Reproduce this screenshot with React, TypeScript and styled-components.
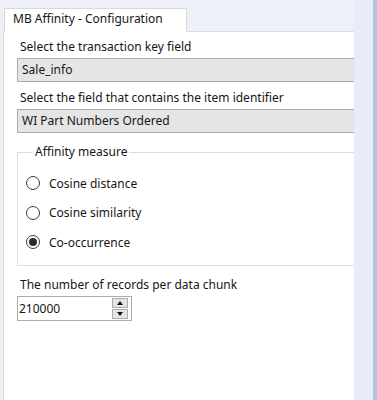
import React from "react";
import styled, {createGlobalStyle} from "styled-components";

const GlobalStyle = createGlobalStyle`
  body {
    margin: 0;
    font-family: "Noto Sans", "Open Sans", sans-serif;
    font-size: 12px;
    color: #161616;
  }
`;

const Window = styled.div`
  width: 377px;
  height: 400px;
  display: flex;
  overflow: hidden;
  background-color: #eef0f8;
`;

const Main = styled.div`
  flex: 1;
  display: flex;
  flex-direction: column;
  padding: 8px 0 0 3px;
`;

const TabStrip = styled.div`
  height: 23px;
  display: flex;
  padding-left: 1px;
`;

const Tab = styled.div`
  width: 183px;
  height: 24px;
  box-sizing: border-box;
  padding-left: 8px;
  line-height: 20px;
  background-color: white;
  border: 1px solid #d9d9d9;
  border-bottom: none;
  position: relative;
  z-index: 1;
`;

const Panel = styled.div`
  flex: 1;
  background-color: white;
  border: 1px solid #dcdcdc;
  border-right: none;
  border-bottom: none;
  padding: 7px 0 0 13px;
`;

const FieldLabel = styled.div<{$top?: number}>`
  height: 16px;
  line-height: 16px;
  padding-left: 3px;
  margin-top: ${(p) => p.$top ?? 0}px;
  margin-bottom: 3px;
`;

const Combo = styled.div`
  height: 24px;
  box-sizing: border-box;
  line-height: 22px;
  padding-left: 4px;
  background-color: #e5e5e5;
  border: 1px solid #acacac;
  border-right: none;
`;

const Group = styled.fieldset`
  margin: 11px 0 0 0;
  padding: 15px 0 0 8px;
  border: 1px solid #dcdcdc;
  border-right: none;
  height: 122px;
  box-sizing: border-box;
  display: flex;
  flex-direction: column;
  gap: 13.5px;
`;

const Legend = styled.legend`
  padding: 0 2px;
  margin-left: 7px;
  line-height: 16px;
`;

const RadioRow = styled.label`
  display: flex;
  align-items: center;
  gap: 9px;
  height: 16px;
`;

const RadioCircle = styled.span<{$checked?: boolean}>`
  width: 14px;
  height: 14px;
  box-sizing: border-box;
  border: 1px solid #3a3a3a;
  border-radius: 50%;
  display: flex;
  align-items: center;
  justify-content: center;

  &::after {
    content: "";
    width: 8px;
    height: 8px;
    border-radius: 50%;
    background-color: ${(p) => (p.$checked ? "#2a2a2a" : "transparent")};
  }
`;

const SpinBox = styled.div`
  width: 115px;
  height: 25px;
  box-sizing: border-box;
  border: 1px solid #acacac;
  display: flex;
  align-items: center;
  justify-content: space-between;
  padding: 1px 3px 1px 1px;
`;

const SpinValue = styled.span`
  line-height: 20px;
`;

const SpinButtons = styled.div`
  display: flex;
  flex-direction: column;
  gap: 1px;
`;

const SpinButton = styled.div<{$down?: boolean}>`
  width: 16px;
  height: 10px;
  box-sizing: border-box;
  background-color: #e5e5e5;
  border: 1px solid #acacac;
  display: flex;
  align-items: center;
  justify-content: center;

  &::after {
    content: "";
    border-left: 3px solid transparent;
    border-right: 3px solid transparent;
    ${(p) =>
      p.$down ? "border-top: 4px solid #111;" : "border-bottom: 4px solid #111;"}
  }
`;

const SideStrip = styled.div`
  width: 19px;
  background-color: #e8ecf8;
`;

const Edge = styled.div`
  width: 4px;
  background-color: #b1c1e6;
`;

const measures = [
  {name: "Cosine distance", checked: false},
  {name: "Cosine similarity", checked: false},
  {name: "Co-occurrence", checked: true},
];

const App: React.FC = () => {
  return (
    <Window>
      <GlobalStyle />
      <Main>
        <TabStrip>
          <Tab>MB Affinity - Configuration</Tab>
        </TabStrip>
        <Panel>
          <FieldLabel>Select the transaction key field</FieldLabel>
          <Combo>Sale_info</Combo>
          <FieldLabel $top={8}>Select the field that contains the item identifier</FieldLabel>
          <Combo>WI Part Numbers Ordered</Combo>
          <Group>
            <Legend>Affinity measure</Legend>
            {measures.map((m) => (
              <RadioRow key={m.name}>
                <RadioCircle $checked={m.checked} />
                {m.name}
              </RadioRow>
            ))}
          </Group>
          <FieldLabel $top={11}>The number of records per data chunk</FieldLabel>
          <SpinBox>
            <SpinValue>210000</SpinValue>
            <SpinButtons>
              <SpinButton />
              <SpinButton $down />
            </SpinButtons>
          </SpinBox>
        </Panel>
      </Main>
      <SideStrip />
      <Edge />
    </Window>
  );
};

export default App;
